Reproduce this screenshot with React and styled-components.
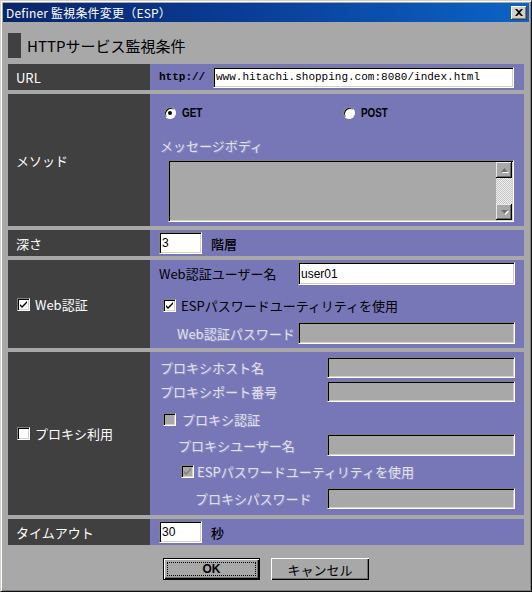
import React from 'react';
import styled, { createGlobalStyle } from 'styled-components';

const FONT = `"Noto Sans CJK JP", "Noto Sans", sans-serif`;
const MONO = `"Liberation Mono", "DejaVu Sans Mono", monospace`;
const GRAY = '#a8a8a8';
const PURPLE = '#7777b7';
const DARK = '#404040';

const Global = createGlobalStyle`
  html, body { margin: 0; padding: 0; background: ${GRAY}; }
  body { font-family: ${FONT}; }
  * { box-sizing: border-box; }
`;

const Window = styled.div`
  width: 532px;
  height: 592px;
  background: ${GRAY};
  border: 1px solid;
  border-color: #d4d0c8 #101010 #101010 #d4d0c8;
  box-shadow: inset 1px 1px 0 #fff, inset -1px -1px 0 #808080;
  padding: 2px;
  display: flex;
  flex-direction: column;
  font-family: ${FONT};
`;

const TitleBar = styled.div`
  height: 19px;
  flex: none;
  background: linear-gradient(90deg, #0a246a 0%, #0a3c96 45%, #0b64c6 100%);
  color: #fff;
  font-size: 12px;
  display: flex;
  align-items: center;
  justify-content: space-between;
  padding: 0 2px 0 3px;
  letter-spacing: 0.2px;
`;

const CloseButton = styled.div`
  width: 16px;
  height: 14px;
  background: #d4d0c8;
  box-shadow: inset -1px -1px 0 #404040, inset 1px 1px 0 #fff, inset -2px -2px 0 #808080;
  display: flex;
  align-items: center;
  justify-content: center;
`;

const Body = styled.div`
  padding: 11px 5px 0 5px;
  display: flex;
  flex-direction: column;
`;

const Header = styled.div`
  height: 25px;
  display: flex;
  align-items: center;
  gap: 6px;
  margin-bottom: 6px;
`;

const HeaderMark = styled.div`
  width: 13px;
  height: 25px;
  background: ${DARK};
`;

const HeaderTitle = styled.div`
  font-size: 15px;
  color: #000;
`;

const Table = styled.div`
  display: flex;
  flex-direction: column;
  gap: 4px;
`;

const Row = styled.div`
  display: grid;
  grid-template-columns: 142px 1fr;
  height: ${(p) => p.$h}px;
`;

const LabelCell = styled.div`
  background: ${DARK};
  color: #fff;
  font-size: 13px;
  display: flex;
  align-items: center;
  gap: 5px;
  padding-left: ${(p) => p.$pl ?? 8}px;
`;

const InlineCell = styled.div`
  background: ${PURPLE};
  display: flex;
  align-items: center;
  padding-left: 9px;
  font-size: 13px;
  color: #000;
`;

const StackCell = styled.div`
  background: ${PURPLE};
  display: flex;
  flex-direction: column;
  padding: ${(p) => p.$pt ?? 0}px 9px 0 0;
  font-size: 13px;
  color: #000;
`;

const Line = styled.div`
  display: flex;
  align-items: center;
  height: ${(p) => p.$h}px;
  margin-top: ${(p) => p.$mt ?? 0}px;
  padding-left: ${(p) => p.$indent ?? 0}px;
  gap: ${(p) => p.$gap ?? 0}px;
`;

const FieldLabel = styled.span`
  flex: 1;
  white-space: nowrap;
`;

const Dim = styled.span`
  color: #e2e2ee;
  text-shadow: 1px 1px 0 #9090c0;
  white-space: nowrap;
  flex: ${(p) => (p.$grow ? 1 : 'none')};
`;

const Prefix = styled.span`
  font-family: ${MONO};
  font-weight: bold;
  font-size: 11px;
  width: 54px;
  flex: none;
`;

const TextBox = styled.div`
  width: ${(p) => p.$w}px;
  height: ${(p) => p.$h ?? 21}px;
  flex: none;
  background: ${(p) => (p.$disabled ? GRAY : '#fff')};
  border: 1px solid;
  border-color: #808080 #fff #fff #808080;
  box-shadow: inset 1px 1px 0 #000, inset -1px -1px 0 #d4d0c8;
  padding-left: 2px;
  display: flex;
  align-items: center;
  font-family: ${(p) => (p.$mono ? MONO : `"Liberation Sans", sans-serif`)};
  font-size: ${(p) => (p.$mono ? 11 : 12)}px;
  color: #000;
  white-space: nowrap;
  overflow: hidden;
`;

const Unit = styled.span`
  margin-left: 9px;
  font-size: 13px;
  font-weight: 500;
`;

const CheckBox = styled.div`
  width: 13px;
  height: 13px;
  flex: none;
  background: ${(p) => (p.$disabled ? GRAY : '#fff')};
  border: 1px solid;
  border-color: #808080 #fff #fff #808080;
  box-shadow: inset 1px 1px 0 #000, inset -1px -1px 0 #d4d0c8;
  display: flex;
  align-items: center;
  justify-content: center;
`;

const Check = ({ checked, disabled }) => (
  <CheckBox $disabled={disabled}>
    {checked && (
      <svg width="9" height="9" viewBox="0 0 9 9">
        <path d="M1 4 L3 6 L8 1 L8 3 L3 8 L1 6 Z" fill={disabled ? '#808080' : '#000'} />
      </svg>
    )}
  </CheckBox>
);

const RadioLine = styled.div`
  display: flex;
  align-items: center;
  height: 14px;
  margin-top: 12px;
  padding-left: 14px;
`;

const RadioOption = styled.div`
  display: flex;
  align-items: center;
  gap: 6px;
  width: ${(p) => p.$w ?? 'auto'};
`;

const RadioText = styled.span`
  font-family: "Liberation Sans", sans-serif;
  font-size: 12px;
  font-weight: bold;
  display: inline-block;
  transform: scaleX(0.82);
  transform-origin: left center;
`;

const RadioCircle = styled.div`
  width: 12px;
  height: 12px;
  flex: none;
  border-radius: 50%;
  background: #fff;
  border: 1px solid;
  border-color: #808080 #fff #fff #808080;
  box-shadow: inset 1px 1px 0 #000;
  display: flex;
  align-items: center;
  justify-content: center;
`;

const RadioDot = styled.div`
  width: 4px;
  height: 4px;
  border-radius: 50%;
  background: #000;
`;

const MemoBox = styled.div`
  width: 346px;
  height: 62px;
  margin: 7px 0 0 18px;
  background: ${GRAY};
  border: 1px solid;
  border-color: #808080 #fff #fff #808080;
  box-shadow: inset 1px 1px 0 #000, inset -1px -1px 0 #d4d0c8;
  padding: 1px;
  display: flex;
  justify-content: flex-end;
`;

const ScrollBar = styled.div`
  width: 16px;
  display: flex;
  flex-direction: column;
`;

const ScrollBtn = styled.div`
  width: 16px;
  height: 16px;
  background: ${GRAY};
  box-shadow: inset -1px -1px 0 #000, inset 1px 1px 0 #e8e8e8, inset -2px -2px 0 #6a6a6a;
  display: flex;
  align-items: center;
  justify-content: center;
`;

const ScrollTrack = styled.div`
  flex: 1;
  background: repeating-conic-gradient(#f0f0f0 0 25%, #c4c4c4 0 50%) 0 0 / 2px 2px;
`;

const ButtonBar = styled.div`
  display: flex;
  justify-content: center;
  gap: 11px;
  margin-top: 13px;
`;

const Button = styled.div`
  width: ${(p) => p.$w}px;
  height: 22px;
  background: ${GRAY};
  font-size: 13px;
  color: #000;
  display: flex;
  align-items: center;
  justify-content: center;
  border: ${(p) => (p.$default ? '1px solid #000' : 'none')};
  box-shadow: inset 1px 1px 0 #fff, inset -1px -1px 0 #000, inset -2px -2px 0 #707070;
  padding: 3px;
`;

const FocusRing = styled.div`
  width: 100%;
  height: 100%;
  border: 1px dotted #000;
  display: flex;
  align-items: center;
  justify-content: center;
  font-family: "Liberation Sans", sans-serif;
  font-size: 12px;
  font-weight: bold;
`;

const Arrow = ({ dir }) => (
  <svg width="9" height="6" viewBox="0 0 9 6">
    {dir === 'up' ? (
      <>
        <path d="M2 6 L5.5 2 L9 6 Z" fill="#fff" />
        <path d="M1 5 L4.5 1 L8 5 Z" fill="#707070" />
      </>
    ) : (
      <>
        <path d="M2 2 L9 2 L5.5 6 Z" fill="#fff" />
        <path d="M1 1 L8 1 L4.5 5 Z" fill="#707070" />
      </>
    )}
  </svg>
);

export default function App() {
  return (
    <>
      <Global />
      <Window>
        <TitleBar>
          <span>Definer 監視条件変更（ESP）</span>
          <CloseButton>
            <svg width="8" height="7" viewBox="0 0 8 7">
              <path d="M0 0 L2 0 L4 2 L6 0 L8 0 L5 3.5 L8 7 L6 7 L4 5 L2 7 L0 7 L3 3.5 Z" fill="#000" />
            </svg>
          </CloseButton>
        </TitleBar>
        <Body>
          <Header>
            <HeaderMark />
            <HeaderTitle>HTTPサービス監視条件</HeaderTitle>
          </Header>
          <Table>
            <Row $h={26}>
              <LabelCell>URL</LabelCell>
              <InlineCell>
                <Prefix>http://</Prefix>
                <TextBox $w={301} $mono>www.hitachi.shopping.com:8080/index.html</TextBox>
              </InlineCell>
            </Row>

            <Row $h={132}>
              <LabelCell>メソッド</LabelCell>
              <StackCell>
                <RadioLine>
                  <RadioOption $w="179px">
                    <RadioCircle>
                      <RadioDot />
                    </RadioCircle>
                    <RadioText>GET</RadioText>
                  </RadioOption>
                  <RadioOption>
                    <RadioCircle />
                    <RadioText>POST</RadioText>
                  </RadioOption>
                </RadioLine>
                <Line $h={16} $mt={17} $indent={10}>
                  <Dim>メッセージボディ</Dim>
                </Line>
                <MemoBox>
                  <ScrollBar>
                    <ScrollBtn>
                      <Arrow dir="up" />
                    </ScrollBtn>
                    <ScrollTrack />
                    <ScrollBtn>
                      <Arrow dir="down" />
                    </ScrollBtn>
                  </ScrollBar>
                </MemoBox>
              </StackCell>
            </Row>

            <Row $h={26}>
              <LabelCell>深さ</LabelCell>
              <InlineCell>
                <TextBox $w={43} $h={22}>3</TextBox>
                <Unit>階層</Unit>
              </InlineCell>
            </Row>

            <Row $h={88}>
              <LabelCell $pl={9}>
                <Check checked />
                Web認証
              </LabelCell>
              <StackCell $pt={2}>
                <Line $h={23} $indent={9}>
                  <FieldLabel>Web認証ユーザー名</FieldLabel>
                  <TextBox $w={217} $h={23}>user01</TextBox>
                </Line>
                <Line $h={22} $mt={9} $indent={13} $gap={5}>
                  <Check checked />
                  <span>ESPパスワードユーティリティを使用</span>
                </Line>
                <Line $h={22} $mt={6} $indent={27}>
                  <Dim $grow>Web認証パスワード</Dim>
                  <TextBox $w={217} $h={22} $disabled />
                </Line>
              </StackCell>
            </Row>

            <Row $h={163}>
              <LabelCell $pl={9}>
                <Check />
                プロキシ利用
              </LabelCell>
              <StackCell $pt={5}>
                <Line $h={21} $indent={10}>
                  <Dim $grow>プロキシホスト名</Dim>
                  <TextBox $w={188} $disabled />
                </Line>
                <Line $h={21} $mt={3} $indent={10}>
                  <Dim $grow>プロキシポート番号</Dim>
                  <TextBox $w={188} $disabled />
                </Line>
                <Line $h={18} $mt={8} $indent={13} $gap={6}>
                  <Check disabled />
                  <Dim>プロキシ認証</Dim>
                </Line>
                <Line $h={22} $mt={6} $indent={28}>
                  <Dim $grow>プロキシユーザー名</Dim>
                  <TextBox $w={188} $h={22} $disabled />
                </Line>
                <Line $h={18} $mt={6} $indent={31} $gap={3}>
                  <Check checked disabled />
                  <Dim>ESPパスワードユーティリティを使用</Dim>
                </Line>
                <Line $h={21} $mt={8} $indent={45}>
                  <Dim $grow>プロキシパスワード</Dim>
                  <TextBox $w={188} $disabled />
                </Line>
              </StackCell>
            </Row>

            <Row $h={26}>
              <LabelCell>タイムアウト</LabelCell>
              <InlineCell>
                <TextBox $w={43} $h={22}>30</TextBox>
                <Unit>秒</Unit>
              </InlineCell>
            </Row>
          </Table>
          <ButtonBar>
            <Button $w={97} $default>
              <FocusRing>OK</FocusRing>
            </Button>
            <Button $w={98}>キャンセル</Button>
          </ButtonBar>
        </Body>
      </Window>
    </>
  );
}
